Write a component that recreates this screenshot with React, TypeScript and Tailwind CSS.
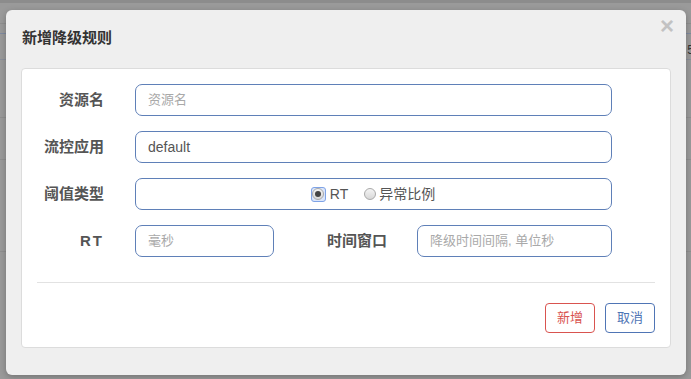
import React from "react";

const font = { fontFamily: '"Liberation Sans", "Noto Sans CJK SC", "Microsoft YaHei", sans-serif' };

function Radio({ checked }: { checked?: boolean }) {
  return (
    <span
      className={
        "flex items-center justify-center w-[15px] h-[15px] rounded-[3px] " +
        (checked ? "border border-[#7fa3e6] bg-[#dbe6fb]" : "")
      }
    >
      <span className="flex items-center justify-center w-[12px] h-[12px] rounded-full border border-[#a9a9a9] bg-gradient-to-b from-[#f4f4f4] to-[#d8d8d8]">
        {checked && <span className="w-[6px] h-[6px] rounded-full bg-[#444]" />}
      </span>
    </span>
  );
}

function Label({ children, w }: { children: React.ReactNode; w: string }) {
  return (
    <div className={"flex justify-end items-center font-bold text-[15px] text-[#555] " + w}>{children}</div>
  );
}

export default function App() {
  return (
    <div className="relative w-[691px] h-[379px] overflow-hidden bg-[#9a9a9a]" style={font}>
      {/* background page behind overlay */}
      <div className="flex flex-col w-full">
        <div className="h-[3px] bg-[#8c8c8c]" />
        <div className="h-[21px] border-b border-[#8f8f8f]" />
        <div className="h-[10px] border-b border-[#7f8aa0]" />
        <div className="h-[26px] border-b border-[#8a8f9a] flex justify-end">
          <span className="text-[12px] leading-[12px] text-[#333] mr-[-3px] mt-[10px]">5</span>
        </div>
        <div className="h-[58px] border-b border-[#8f8f8f]" />
        <div className="h-[42px] border-b border-[#8f8f8f]" />
        <div className="h-[92px] border-b border-[#8f8f8f]" />
      </div>

      {/* modal */}
      <div className="absolute left-[6px] top-[10px] w-[680px] h-[365px] bg-[#efefef] rounded-[6px] shadow-[0_2px_6px_rgba(0,0,0,0.25)] flex flex-col">
        <div className="flex items-start justify-between h-[58px] pl-[16px] pr-[12px]">
          <div className="mt-[18px] text-[15px] font-bold text-[#333] leading-[20px]">新增降级规则</div>
          <div className="mt-[4px] text-[24px] leading-[24px] font-bold text-[#c2c2c2]">
            ×
          </div>
        </div>
        <div className="mx-[15px] h-[280px] bg-white border border-[#dcdcdc] rounded-[4px] px-[15px] pt-[15px] flex flex-col">
          <div className="flex flex-col gap-[15px]">
            <div className="flex h-[32px]">
              <Label w="w-[67px]">资源名</Label>
              <div className="ml-[31px] w-[477px] h-[32px] border border-[#5f80b8] rounded-[7px] flex items-center pl-[12px] text-[13px] text-[#a9a9a9]">
                资源名
              </div>
            </div>
            <div className="flex h-[32px]">
              <Label w="w-[67px]">流控应用</Label>
              <div className="ml-[31px] w-[477px] h-[32px] border border-[#5f80b8] rounded-[7px] flex items-center pl-[12px] text-[14px] text-[#555]">
                default
              </div>
            </div>
            <div className="flex h-[32px]">
              <Label w="w-[67px]">阈值类型</Label>
              <div className="ml-[31px] w-[477px] h-[32px] border border-[#5f80b8] rounded-[7px] flex items-center justify-center text-[14px] text-[#555]">
                <span className="ml-[-1px] flex items-center">
                  <Radio checked />
                  <span className="ml-[4px]">RT</span>
                </span>
                <span className="ml-[14px] flex items-center">
                  <Radio />
                  <span className="ml-[2px]">异常比例</span>
                </span>
              </div>
            </div>
            <div className="flex h-[32px]">
              <Label w="w-[67px]"><span className="tracking-[2px]">RT</span></Label>
              <div className="ml-[31px] w-[139px] h-[32px] border border-[#5f80b8] rounded-[7px] flex items-center pl-[12px] text-[13px] text-[#a9a9a9]">
                毫秒
              </div>
              <Label w="w-[113px]">时间窗口</Label>
              <div className="ml-[30px] w-[195px] h-[32px] border border-[#5f80b8] rounded-[7px] flex items-center pl-[12px] text-[13px] text-[#a9a9a9]">
                降级时间间隔, 单位秒
              </div>
            </div>
          </div>
          <div className="mt-[25px] border-t border-[#e2e2e2]" />
          <div className="mt-[20px] flex justify-end gap-[10px]">
            <div className="w-[50px] h-[30px] border border-[#d9534f] rounded-[4px] flex items-center justify-center text-[13px] text-[#d9534f]">
              新增
            </div>
            <div className="w-[50px] h-[30px] border border-[#4f75b5] rounded-[4px] flex items-center justify-center text-[13px] text-[#4f75b5]">
              取消
            </div>
          </div>
        </div>
      </div>
    </div>
  );
}
